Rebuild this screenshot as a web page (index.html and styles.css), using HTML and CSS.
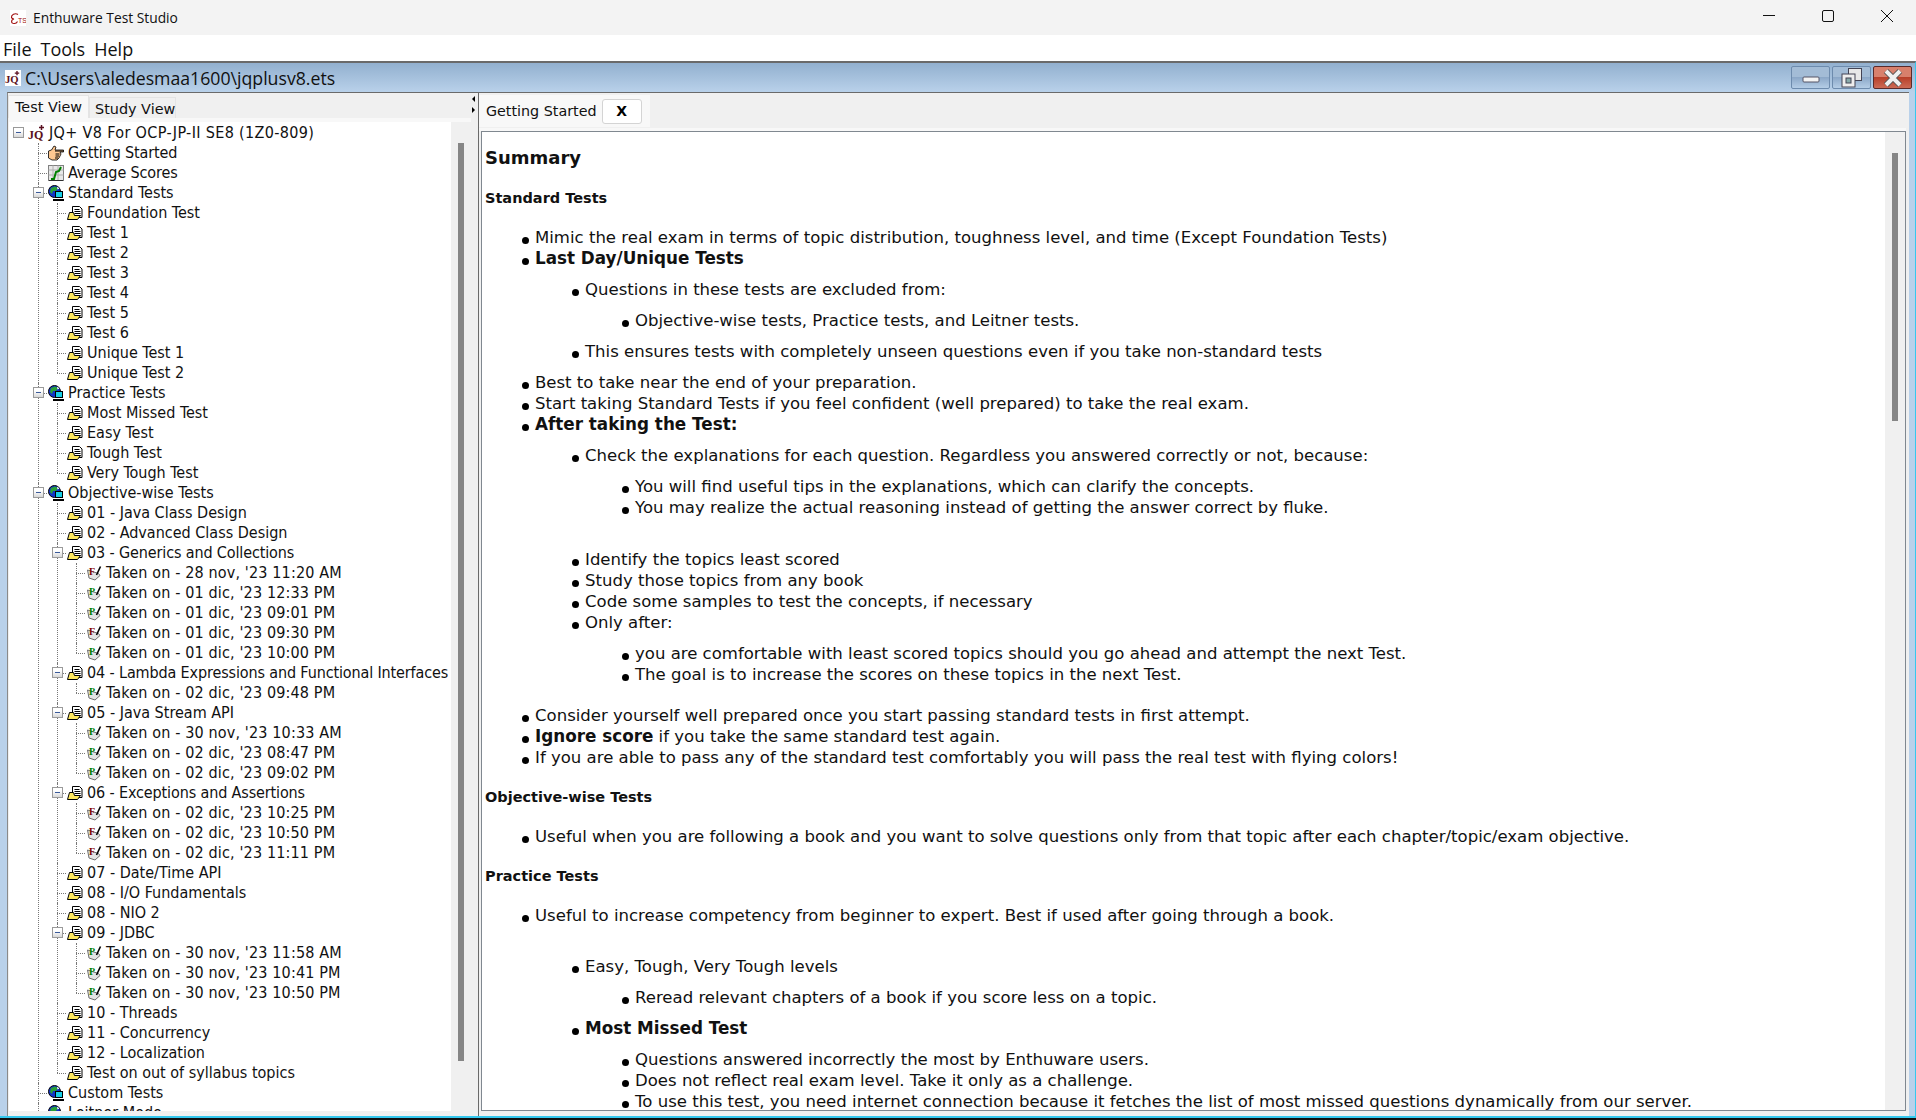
FILE: index.html
```html
<!DOCTYPE html>
<html lang="en">
<head>
  <meta charset="UTF-8" />
  <title>Enthuware Test Studio</title>
  <link rel="stylesheet" href="styles.css">
</head>
<body>
  <svg class="defs" width="0" height="0">
    <symbol id="ic-folder" viewBox="0 0 16 16">
      <path d="M5.500 1.500h7l2.500 2.500v8.500h-9.500z" fill="#fff" stroke="#000"/>
      <path d="M7.500 4.500h5M7.500 6.500h6M7.500 8.500h6M7.500 10.500h6" stroke="#000"/>
      <path d="M.5 14.500L2.500 7.500h4l1 3h6l-3 4z" fill="#ffe860" stroke="#000"/>
    </symbol>
    <symbol id="ic-globe" viewBox="0 0 16 16">
      <circle cx="6.500" cy="6.500" r="6" fill="#1034c8" stroke="#000"/>
      <path d="M3 3l4-1.500 3 1.500-2 3-3 0-1 3-2-2z" fill="#28a038"/>
      <path d="M9 1.500l2.500 2-2 1z" fill="#fff"/>
      <rect x="7.500" y="6.500" width="7" height="6" fill="#18d0e8" stroke="#000"/>
      <path d="M5 15h11" stroke="#000" stroke-width="2"/>
    </symbol>
    <symbol id="ic-hand" viewBox="0 0 16 16">
      <path d="M.5 6l3-1 2.500-4 2 1-1 3h8.500v2h-3.500l1 2-1 2-1 2-2 2H4L.5 13z" fill="#ffc890" stroke="#000" stroke-width=".8"/>
      <path d="M7 6h8.500M7.500 9h4M7.500 11h3.500M7 13h3" stroke="#000" stroke-width="1"/>
    </symbol>
    <symbol id="ic-chart" viewBox="0 0 16 16">
      <rect x=".5" y=".5" width="15" height="15" fill="#e8e8e8" stroke="#808080"/>
      <path d="M.5 5h15M.5 10h15M5 .5v15M10 .5v15" stroke="#b0b0b0"/>
      <path d="M3 14h3l2-7 3-1 2-4" fill="none" stroke="#008000" stroke-width="2"/>
      <path d="M1 15.500h14" stroke="#303030"/>
    </symbol>
    <symbol id="ic-sheet" viewBox="0 0 16 16">
      <path d="M1.500 5l11 3.500 1.500 2-5 4.500-6-2z" fill="#e4e4e4" stroke="#707070"/>
      <path d="M10.500 10L14.500 1.500" stroke="#000" stroke-width="1.600"/>
    </symbol>
  </svg>

  <header class="titlebar">
    <svg class="title-icon" viewBox="0 0 16 16">
      <rect width="16" height="16" fill="#fff"/>
      <path d="M8 4.500C5 2.500 1 5 1.500 7.500 2 9 3.500 9 4 9 .5 10 1 14 4.500 13.500c1.500 0 2.500-1 3-2" fill="none" stroke="#a01010" stroke-width="1.100"/>
      <text x="8" y="12.500" class="ic-small">TS</text>
    </svg>
    <span class="title-text">Enthuware Test Studio</span>
    <div class="win-buttons">
      <svg class="win-btn" viewBox="0 0 58 35"><path d="M21 15.500h12" stroke="#111" fill="none"/></svg>
      <svg class="win-btn" viewBox="0 0 58 35"><rect x="22.500" y="10.500" width="11" height="11" rx="1.500" stroke="#111" fill="none"/></svg>
      <svg class="win-btn" viewBox="0 0 58 35"><path d="M23 10l12 12M35 10L23 22" stroke="#111" fill="none"/></svg>
    </div>
  </header>

  <nav class="menubar">
    <span>File</span><span>Tools</span><span>Help</span>
  </nav>

  <main class="frame">
    <div class="frame-title">
      <svg class="frame-icon" viewBox="0 0 18 16"><text x="0" y="14" class="ic-jq">JQ</text><path d="M13.500 0v5M11 2.500h5" stroke="#5a1020" stroke-width="1.500"/></svg>
      <span class="frame-text">C:\Users\aledesmaa1600\jqplusv8.ets</span>
      <div class="frame-buttons">
        <div class="fbtn">
          <svg viewBox="0 0 38 22" width="38" height="22"><rect x="11" y="10" width="16" height="5" rx="1" fill="#f4f4f4" stroke="#556"/></svg>
        </div>
        <div class="fbtn">
          <svg viewBox="0 0 38 22" width="38" height="22">
            <rect x="15.500" y="1.500" width="13" height="12" fill="#e8e8e8" stroke="#445"/>
            <rect x="9" y="7" width="13" height="13" fill="#eee" stroke="#445"/>
            <rect x="13" y="11" width="5" height="5" fill="#8aa" stroke="#445"/>
          </svg>
        </div>
        <div class="fbtn fbtn-close">
          <svg viewBox="0 0 38 22" width="38" height="22"><path d="M12 4l14 14M26 4L12 18" stroke="#555" stroke-width="6"/><path d="M12 4l14 14M26 4L12 18" stroke="#f0f0f0" stroke-width="4"/></svg>
        </div>
      </div>
    </div>

    <div class="frame-body">
      <section class="left-pane">
        <div class="tabs">
          <span class="tab tab-active">Test View</span>
          <span class="tab">Study View</span>
        </div>
        <div class="tree-box">
          <div class="tree-scroll">
            <div class="row root"><i class="exp"></i><svg class="ic ic-root" viewBox="0 0 18 16"><text x="0" y="14" class="ic-jq">JQ</text><path d="M13.500 0v5M11 2.500h5" stroke="#5a1020" stroke-width="1.500"/></svg><span>JQ+ V8 For OCP-JP-II SE8 (1Z0-809)</span></div>
            <ul class="tree tree-top">
              <li><div class="row"><svg class="ic"><use href="#ic-hand"/></svg><span class="tight">Getting Started</span></div></li>
              <li><div class="row"><svg class="ic"><use href="#ic-chart"/></svg><span class="tight">Average Scores</span></div></li>
              <li><div class="row"><i class="exp"></i><svg class="ic"><use href="#ic-globe"/></svg><span>Standard Tests</span></div>
                <ul class="tree">
                  <li><div class="row"><svg class="ic"><use href="#ic-folder"/></svg><span>Foundation Test</span></div></li>
                  <li><div class="row"><svg class="ic"><use href="#ic-folder"/></svg><span>Test 1</span></div></li>
                  <li><div class="row"><svg class="ic"><use href="#ic-folder"/></svg><span>Test 2</span></div></li>
                  <li><div class="row"><svg class="ic"><use href="#ic-folder"/></svg><span>Test 3</span></div></li>
                  <li><div class="row"><svg class="ic"><use href="#ic-folder"/></svg><span>Test 4</span></div></li>
                  <li><div class="row"><svg class="ic"><use href="#ic-folder"/></svg><span>Test 5</span></div></li>
                  <li><div class="row"><svg class="ic"><use href="#ic-folder"/></svg><span>Test 6</span></div></li>
                  <li><div class="row"><svg class="ic"><use href="#ic-folder"/></svg><span>Unique Test 1</span></div></li>
                  <li><div class="row"><svg class="ic"><use href="#ic-folder"/></svg><span>Unique Test 2</span></div></li>
                </ul>
              </li>
              <li><div class="row"><i class="exp"></i><svg class="ic"><use href="#ic-globe"/></svg><span>Practice Tests</span></div>
                <ul class="tree">
                  <li><div class="row"><svg class="ic"><use href="#ic-folder"/></svg><span>Most Missed Test</span></div></li>
                  <li><div class="row"><svg class="ic"><use href="#ic-folder"/></svg><span>Easy Test</span></div></li>
                  <li><div class="row"><svg class="ic"><use href="#ic-folder"/></svg><span>Tough Test</span></div></li>
                  <li><div class="row"><svg class="ic"><use href="#ic-folder"/></svg><span>Very Tough Test</span></div></li>
                </ul>
              </li>
              <li><div class="row"><i class="exp"></i><svg class="ic"><use href="#ic-globe"/></svg><span>Objective-wise Tests</span></div>
                <ul class="tree">
                  <li><div class="row"><svg class="ic"><use href="#ic-folder"/></svg><span>01 - Java Class Design</span></div></li>
                  <li><div class="row"><svg class="ic"><use href="#ic-folder"/></svg><span>02 - Advanced Class Design</span></div></li>
                  <li><div class="row"><i class="exp"></i><svg class="ic"><use href="#ic-folder"/></svg><span class="tight">03 - Generics and Collections</span></div>
                    <ul class="tree">
                      <li><div class="row"><svg class="ic" viewBox="0 0 16 16"><use href="#ic-sheet"/><text x="3" y="10" class="ic-letter fail">F</text></svg><span>Taken on - 28 nov, '23 11:20 AM</span></div></li>
                      <li><div class="row"><svg class="ic" viewBox="0 0 16 16"><use href="#ic-sheet"/><text x="3" y="10" class="ic-letter pass">P</text></svg><span>Taken on - 01 dic, '23 12:33 PM</span></div></li>
                      <li><div class="row"><svg class="ic" viewBox="0 0 16 16"><use href="#ic-sheet"/><text x="3" y="10" class="ic-letter pass">P</text></svg><span>Taken on - 01 dic, '23 09:01 PM</span></div></li>
                      <li><div class="row"><svg class="ic" viewBox="0 0 16 16"><use href="#ic-sheet"/><text x="3" y="10" class="ic-letter fail">F</text></svg><span>Taken on - 01 dic, '23 09:30 PM</span></div></li>
                      <li><div class="row"><svg class="ic" viewBox="0 0 16 16"><use href="#ic-sheet"/><text x="3" y="10" class="ic-letter pass">P</text></svg><span>Taken on - 01 dic, '23 10:00 PM</span></div></li>
                    </ul>
                  </li>
                  <li><div class="row"><i class="exp"></i><svg class="ic"><use href="#ic-folder"/></svg><span class="tight">04 - Lambda Expressions and Functional Interfaces</span></div>
                    <ul class="tree">
                      <li><div class="row"><svg class="ic" viewBox="0 0 16 16"><use href="#ic-sheet"/><text x="3" y="10" class="ic-letter pass">P</text></svg><span>Taken on - 02 dic, '23 09:48 PM</span></div></li>
                    </ul>
                  </li>
                  <li><div class="row"><i class="exp"></i><svg class="ic"><use href="#ic-folder"/></svg><span>05 - Java Stream API</span></div>
                    <ul class="tree">
                      <li><div class="row"><svg class="ic" viewBox="0 0 16 16"><use href="#ic-sheet"/><text x="3" y="10" class="ic-letter pass">P</text></svg><span>Taken on - 30 nov, '23 10:33 AM</span></div></li>
                      <li><div class="row"><svg class="ic" viewBox="0 0 16 16"><use href="#ic-sheet"/><text x="3" y="10" class="ic-letter pass">P</text></svg><span>Taken on - 02 dic, '23 08:47 PM</span></div></li>
                      <li><div class="row"><svg class="ic" viewBox="0 0 16 16"><use href="#ic-sheet"/><text x="3" y="10" class="ic-letter pass">P</text></svg><span>Taken on - 02 dic, '23 09:02 PM</span></div></li>
                    </ul>
                  </li>
                  <li><div class="row"><i class="exp"></i><svg class="ic"><use href="#ic-folder"/></svg><span class="tight">06 - Exceptions and Assertions</span></div>
                    <ul class="tree">
                      <li><div class="row"><svg class="ic" viewBox="0 0 16 16"><use href="#ic-sheet"/><text x="3" y="10" class="ic-letter fail">F</text></svg><span>Taken on - 02 dic, '23 10:25 PM</span></div></li>
                      <li><div class="row"><svg class="ic" viewBox="0 0 16 16"><use href="#ic-sheet"/><text x="3" y="10" class="ic-letter fail">F</text></svg><span>Taken on - 02 dic, '23 10:50 PM</span></div></li>
                      <li><div class="row"><svg class="ic" viewBox="0 0 16 16"><use href="#ic-sheet"/><text x="3" y="10" class="ic-letter fail">F</text></svg><span>Taken on - 02 dic, '23 11:11 PM</span></div></li>
                    </ul>
                  </li>
                  <li><div class="row"><svg class="ic"><use href="#ic-folder"/></svg><span>07 - Date/Time API</span></div></li>
                  <li><div class="row"><svg class="ic"><use href="#ic-folder"/></svg><span>08 - I/O Fundamentals</span></div></li>
                  <li><div class="row"><svg class="ic"><use href="#ic-folder"/></svg><span>08 - NIO 2</span></div></li>
                  <li><div class="row"><i class="exp"></i><svg class="ic"><use href="#ic-folder"/></svg><span>09 - JDBC</span></div>
                    <ul class="tree">
                      <li><div class="row"><svg class="ic" viewBox="0 0 16 16"><use href="#ic-sheet"/><text x="3" y="10" class="ic-letter pass">P</text></svg><span>Taken on - 30 nov, '23 11:58 AM</span></div></li>
                      <li><div class="row"><svg class="ic" viewBox="0 0 16 16"><use href="#ic-sheet"/><text x="3" y="10" class="ic-letter pass">P</text></svg><span>Taken on - 30 nov, '23 10:41 PM</span></div></li>
                      <li><div class="row"><svg class="ic" viewBox="0 0 16 16"><use href="#ic-sheet"/><text x="3" y="10" class="ic-letter pass">P</text></svg><span>Taken on - 30 nov, '23 10:50 PM</span></div></li>
                    </ul>
                  </li>
                  <li><div class="row"><svg class="ic"><use href="#ic-folder"/></svg><span>10 - Threads</span></div></li>
                  <li><div class="row"><svg class="ic"><use href="#ic-folder"/></svg><span>11 - Concurrency</span></div></li>
                  <li><div class="row"><svg class="ic"><use href="#ic-folder"/></svg><span>12 - Localization</span></div></li>
                  <li><div class="row"><svg class="ic"><use href="#ic-folder"/></svg><span>Test on out of syllabus topics</span></div></li>
                </ul>
              </li>
              <li><div class="row"><svg class="ic"><use href="#ic-globe"/></svg><span>Custom Tests</span></div></li>
              <li><div class="row"><svg class="ic"><use href="#ic-globe"/></svg><span>Leitner Mode</span></div></li>
            </ul>
          </div>
          <div class="vscroll"><div class="thumb thumb-left"></div></div>
        </div>
      </section>

      <div class="splitter"><i class="arrow-l"></i><i class="arrow-r"></i></div>

      <section class="right-pane">
        <div class="doc-tabs">
          <div class="doc-tab"><span>Getting Started</span><button class="doc-close">X</button></div>
        </div>
        <div class="doc-box">
          <article class="doc">
            <h1>Summary</h1>
            <h2>Standard Tests</h2>
            <ul>
              <li>Mimic the real exam in terms of topic distribution, toughness level, and time (Except Foundation Tests)</li>
              <li><b>Last Day/Unique Tests</b>
                <ul>
                  <li>Questions in these tests are excluded from:
                    <ul><li>Objective-wise tests, Practice tests, and Leitner tests.</li></ul>
                  </li>
                  <li>This ensures tests with completely unseen questions even if you take non-standard tests</li>
                </ul>
              </li>
              <li>Best to take near the end of your preparation.</li>
              <li>Start taking Standard Tests if you feel confident (well prepared) to take the real exam.</li>
              <li><b>After taking the Test:</b>
                <ul>
                  <li>Check the explanations for each question. Regardless you answered correctly or not, because:
                    <ul>
                      <li>You will find useful tips in the explanations, which can clarify the concepts.</li>
                      <li>You may realize the actual reasoning instead of getting the answer correct by fluke.</li>
                    </ul>
                    <p class="blank"></p>
                  </li>
                  <li>Identify the topics least scored</li>
                  <li>Study those topics from any book</li>
                  <li>Code some samples to test the concepts, if necessary</li>
                  <li>Only after:
                    <ul>
                      <li>you are comfortable with least scored topics should you go ahead and attempt the next Test.</li>
                      <li>The goal is to increase the scores on these topics in the next Test.</li>
                    </ul>
                  </li>
                </ul>
              </li>
              <li>Consider yourself well prepared once you start passing standard tests in first attempt.</li>
              <li><b>Ignore score</b> if you take the same standard test again.</li>
              <li>If you are able to pass any of the standard test comfortably you will pass the real test with flying colors!</li>
            </ul>
            <h2>Objective-wise Tests</h2>
            <ul>
              <li>Useful when you are following a book and you want to solve questions only from that topic after each chapter/topic/exam objective.</li>
            </ul>
            <h2>Practice Tests</h2>
            <ul>
              <li>Useful to increase competency from beginner to expert. Best if used after going through a book.
                <p class="blank blank-short"></p>
                <ul>
                  <li>Easy, Tough, Very Tough levels
                    <ul><li>Reread relevant chapters of a book if you score less on a topic.</li></ul>
                  </li>
                  <li><b>Most Missed Test</b>
                    <ul>
                      <li>Questions answered incorrectly the most by Enthuware users.</li>
                      <li>Does not reflect real exam level. Take it only as a challenge.</li>
                      <li>To use this test, you need internet connection because it fetches the list of most missed questions dynamically from our server.</li>
                    </ul>
                  </li>
                </ul>
              </li>
            </ul>
          </article>
          <div class="vscroll"><div class="thumb thumb-right"></div></div>
        </div>
      </section>
    </div>
  </main>
  <div class="taskbar"></div>
</body>
</html>
```
FILE: styles.css
```css
* {
  box-sizing: border-box;
}

html, body {
  height: 100%;
}

body {
  margin: 0;
  height: 1120px;
  overflow: hidden;
  display: flex;
  flex-direction: column;
  background: #fff;
  font-family: "DejaVu Sans Condensed", "DejaVu Sans", sans-serif;
  color: #000;
}

.defs {
  position: absolute;
}

.ic-letter {
  font: bold 10px "Liberation Serif", serif;
}

.pass {
  fill: #008000;
}

.fail {
  fill: #800000;
}

.ic-small {
  font: 7px "Liberation Sans", sans-serif;
  fill: #a01010;
}

.ic-jq {
  font: bold 12px "Liberation Serif", serif;
  fill: #5a1020;
}

/* window title */
.titlebar {
  height: 35px;
  flex: none;
  display: flex;
  align-items: center;
  background: #f3f3f3;
  padding-left: 10px;
}

.title-icon {
  width: 16px;
  height: 16px;
  margin-right: 7px;
}

.title-text {
  font: 13.800px "Open Sans", sans-serif;
  color: #111;
}

.win-buttons {
  margin-left: auto;
  display: flex;
}

.win-btn {
  width: 58px;
  height: 35px;
}

.menubar {
  height: 26px;
  flex: none;
  display: flex;
  gap: 9px;
  align-items: center;
  padding: 2px 0 0 3px;
  background: #fff;
  font: 18px "Open Sans", sans-serif;
  color: #111;
}

/* internal frame */
.frame {
  flex: 1;
  min-height: 0;
  display: flex;
  flex-direction: column;
  border-top: 2px solid #6a6a6a;
  border-right: 1px solid #35c8ee;
  border-bottom: 2px solid #35c8ee;
  background: #b9d1ea;
}

.frame-title {
  height: 29px;
  flex: none;
  display: flex;
  align-items: center;
  padding-left: 5px;
  background: linear-gradient(#92b0cf, #b9d1ea);
}

.frame-icon {
  width: 16px;
  height: 16px;
  margin-right: 4px;
  background: #fff;
}

.frame-text {
  font: 17.700px "Open Sans", sans-serif;
  color: #111;
}

.frame-buttons {
  margin-left: auto;
  display: flex;
  gap: 2px;
  padding-right: 3px;
}

.fbtn {
  width: 39px;
  height: 23px;
  border: 1px solid #6d8bad;
  border-radius: 2px;
  background: linear-gradient(#a3bcd6 50%, #8ca8c8 50%, #b4cde6);
}

.fbtn svg {
  display: block;
}

.fbtn-close {
  border-color: #5a2a2a;
  background: linear-gradient(#d8806c 50%, #b8402a 50%, #cc6a55);
}

.frame-body {
  flex: 1;
  min-height: 0;
  display: flex;
  margin: 0 6px 0 7px;
  border-top: 1px solid #6a6a6a;
  border-left: 1px solid #8a8a8a;
  background: #f0f0f0;
}

.left-pane {
  width: 464px;
  flex: none;
  display: flex;
  flex-direction: column;
  background: #f0f0f0;
}

.tabs {
  height: 25px;
  flex: none;
  display: flex;
  align-items: flex-end;
  font-family: "DejaVu Sans", sans-serif;
}

.tab {
  font-size: 14.400px;
  line-height: 23px;
  height: 21px;
  width: 87px;
  padding: 0 0 0 5px;
  border: 1px solid #e4e4e4;
  border-bottom: none;
  color: #111;
  white-space: nowrap;
}

.tab-active {
  height: 23px;
  width: 81px;
  padding-left: 6px;
  background: #f8f8f8;
}

.tree-box {
  flex: 1;
  min-height: 0;
  display: flex;
  background: #fff;
  margin: 0 1px 5px 1px;
  border-top: 4px solid #f8f8f8;
}

.tree-scroll {
  flex: 1;
  min-width: 0;
  overflow: hidden;
  padding-top: 1px;
  font-size: 16px;
  color: #111;
}

.vscroll {
  width: 20px;
  flex: none;
  background: #f0f0f0;
  position: relative;
}

.thumb {
  position: absolute;
  left: 7px;
  width: 6px;
  background: #868686;
}

.thumb-left {
  top: 21px;
  height: 918px;
}

.thumb-right {
  top: 21px;
  height: 268px;
}

/* tree with dotted connectors */
.row {
  height: 20px;
  display: flex;
  align-items: center;
  position: relative;
  white-space: nowrap;
}

.row span {
  line-height: 20px;
}

.row .tight {
  letter-spacing: -.13px;
}

.root span {
  letter-spacing: .35px;
}

.tree .tree .tree span {
  letter-spacing: .15px;
}

.root {
  padding-left: 19px;
}

.ic {
  width: 16px;
  height: 16px;
  flex: none;
  margin-right: 4px;
}

.ic-root {
  width: 18px;
  margin-right: 3px;
}

.tree {
  list-style: none;
  margin: 0;
  padding: 0;
}

.tree-top {
  margin-left: 20px;
}

.tree > li {
  position: relative;
  padding-left: 19px;
}

.tree > li::before {
  content: "";
  position: absolute;
  left: 9px;
  top: 10px;
  width: 9px;
  border-top: 1px dotted #777;
}

.tree > li::after {
  content: "";
  position: absolute;
  left: 9px;
  top: 0;
  bottom: 0;
  border-left: 1px dotted #777;
}

.tree > li:last-child::after {
  bottom: auto;
  height: 10px;
}

.exp {
  position: absolute;
  left: -15px;
  top: 4px;
  width: 11px;
  height: 11px;
  z-index: 1;
  border: 1px solid #9a9a9a;
  background: linear-gradient(#fff 30%, #d8d8d8);
}

.exp::after {
  content: "";
  position: absolute;
  left: 2px;
  top: 4px;
  width: 5px;
  height: 1px;
  background: #3a5a9a;
}

.root .exp {
  left: 4px;
}

/* splitter */
.splitter {
  width: 6px;
  flex: none;
  position: relative;
  background: #f0f0f0;
}

.arrow-l, .arrow-r {
  position: absolute;
  left: 0;
  width: 0;
  height: 0;
  border-top: 3px solid transparent;
  border-bottom: 3px solid transparent;
}

.arrow-l {
  top: 3px;
  border-right: 3px solid #000;
}

.arrow-r {
  top: 14px;
  border-left: 3px solid #000;
}

/* right pane */
.right-pane {
  flex: 1;
  min-width: 0;
  display: flex;
  flex-direction: column;
  border-left: 1px solid #6a6a6a;
  background: #f0f0f0;
  padding-right: 3px;
}

.doc-tabs {
  height: 38px;
  flex: none;
  display: flex;
  align-items: flex-start;
  padding-top: 2px;
  border-bottom: 3px solid #f8f8f8;
}

.doc-tab {
  width: 171px;
  height: 32px;
  display: flex;
  align-items: center;
  gap: 5px;
  padding-left: 7px;
  background: #f8f8f8;
  font: 14.300px "DejaVu Sans", sans-serif;
  color: #111;
  white-space: nowrap;
}

.doc-close {
  width: 40px;
  height: 25px;
  padding: 0;
  background: #fff;
  border: 1px solid #d4d4d4;
  border-radius: 3px;
  font: bold 14px "DejaVu Sans", sans-serif;
  color: #000;
}

.doc-box {
  flex: 1;
  min-height: 0;
  margin: 0 0 5px 2px;
  display: flex;
  background: #fff;
  border: 1px solid #808890;
}

.doc {
  flex: 1;
  min-width: 0;
  overflow: hidden;
  padding: 10px 3px;
  font: 16.550px/21px "DejaVu Sans", sans-serif;
  color: #111;
}

.doc h1 {
  margin: 4px 0 18px;
  font-size: 18px;
  line-height: 24px;
}

.doc h2 {
  margin: 10px 0 19px;
  font-size: 14.500px;
  line-height: 20px;
}

.doc ul {
  display: flow-root;
  margin: 10px 0;
  padding: 0 0 0 50px;
  list-style: none;
}

.doc > ul {
  margin: 19px 0;
}

.doc li {
  position: relative;
}

.doc li b {
  font-size: 16.800px;
}

.doc li::before {
  content: "";
  position: absolute;
  left: -13px;
  top: 10px;
  width: 7px;
  height: 7px;
  border-radius: 50%;
  background: #000;
}

.doc .blank {
  margin: 0;
  height: 21px;
}

.doc .blank-short {
  height: 20px;
}

.taskbar {
  height: 2px;
  flex: none;
  background: #101010;
}
```
